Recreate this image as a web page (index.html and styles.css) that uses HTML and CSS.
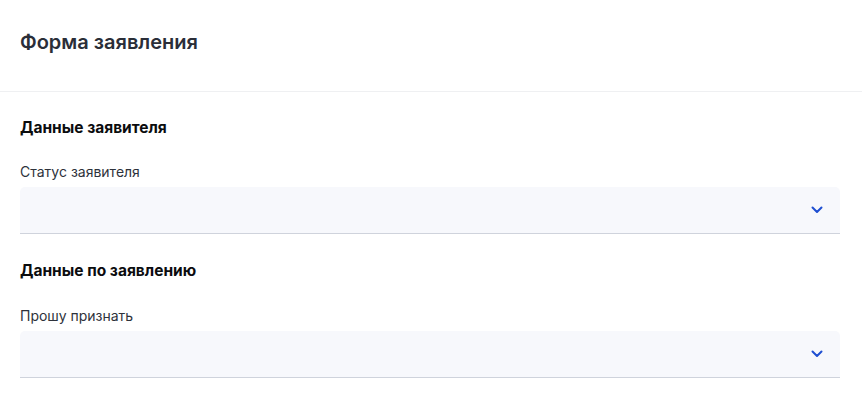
FILE: index.html
```html
<!DOCTYPE html>
<html lang="ru">
<head>
<meta charset="utf-8">
<link rel="stylesheet" href="styles.css">
</head>
<body>
<div class="page">
  <header class="head">
    <h1 class="title">Форма заявления</h1>
  </header>
  <main class="content">
    <section class="section">
      <h2 class="section-title">Данные заявителя</h2>
      <div class="field">
        <label class="label">Статус заявителя</label>
        <div class="select">
          <svg class="chevron" width="12" height="8" viewBox="0 0 12 8"><path d="M1.5 1.5 6 6l4.5-4.5" fill="none" stroke="#1f4fd1" stroke-width="2" stroke-linecap="round" stroke-linejoin="round"/></svg>
        </div>
      </div>
    </section>
    <section class="section">
      <h2 class="section-title">Данные по заявлению</h2>
      <div class="field">
        <label class="label">Прошу признать</label>
        <div class="select">
          <svg class="chevron" width="12" height="8" viewBox="0 0 12 8"><path d="M1.5 1.5 6 6l4.5-4.5" fill="none" stroke="#1f4fd1" stroke-width="2" stroke-linecap="round" stroke-linejoin="round"/></svg>
        </div>
      </div>
    </section>
  </main>
</div>
</body>
</html>
```
FILE: styles.css
```css
* { box-sizing: border-box; }
html, body { margin: 0; padding: 0; background: #fff; }
body { font-family: Inter, "Noto Sans", sans-serif; color: #1d1f24; }
.page { width: 862px; }
.head {
  height: 92px;
  padding: 28px 20px 0;
  border-bottom: 1px solid #eff0f2;
}
.title {
  margin: 0;
  font-size: 20px;
  font-weight: 600;
  color: #2a2e38;
  line-height: 28px;
}
.content { padding: 0 22px 0 20px; }
.section-title {
  margin: 0;
  padding-top: 26px;
  font-size: 15.5px;
  font-weight: 700;
  color: #0b0c0e;
  line-height: 20px;
}
.section + .section .section-title { padding-top: 27px; }
.field { margin-top: 25px; }
.section + .section .field { margin-top: 26px; }
.label {
  display: block;
  font-size: 14px;
  color: #2e323b;
  line-height: 18px;
  margin-bottom: 6px;
}
.select {
  height: 47px;
  background: #f7f8fc;
  border-radius: 5px 5px 0 0;
  border-bottom: 1px solid #cfd3dc;
  display: flex;
  align-items: center;
  justify-content: flex-end;
  padding-right: 17px;
}
.chevron { display: block; }
```
